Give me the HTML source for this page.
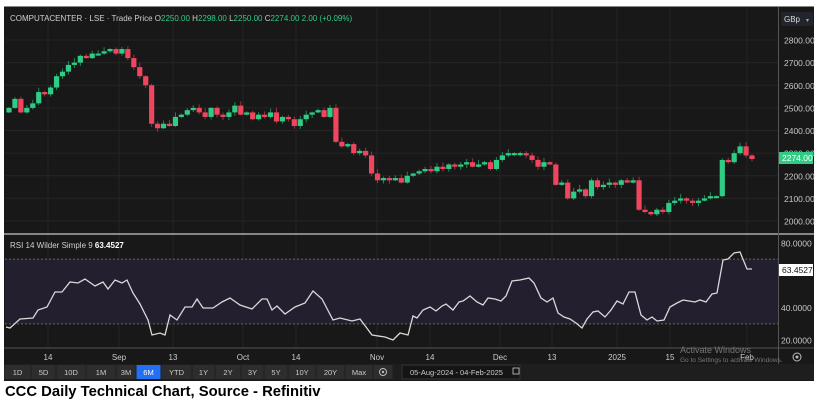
<!DOCTYPE html>
<html><head><meta charset="utf-8"><style>
body{margin:0;width:821px;height:405px;background:#fff;overflow:hidden;font-family:"Liberation Sans",sans-serif;position:relative}
#p{position:absolute;left:4px;top:6px;width:810px;height:374px;background:#181818;border-top:1px solid #888}
.cap{position:absolute;left:5px;top:384px;font-weight:bold;font-size:14.8px;color:#000;letter-spacing:0}
svg{position:absolute;left:0;top:0}
</style></head><body>
<div id="p"></div>
<svg id="s" width="821" height="405" font-family="Liberation Sans, sans-serif"></svg>
<div class="cap">CCC Daily Technical Chart, Source - Refinitiv</div>
<script>
var s='';
function Y(p){return 40+(2800-p)*0.2263}
function R(r){return 243+(80-r)*1.617}
var vx=[48,119,173,243,296,377,430,500,552,617,670,747];
vx.forEach(function(x){s+='<line x1="'+x+'" y1="8" x2="'+x+'" y2="347" stroke="#252525"/>';});
for(var p=2000;p<=2800;p+=100){var y=Y(p);s+='<line x1="5" y1="'+y+'" x2="778" y2="'+y+'" stroke="#252525"/>';
s+='<text x="784" y="'+(y+3.5)+'" fill="#c8c8c8" font-size="8.5">'+p+'.00</text>';}
s+='<rect x="5" y="'+R(70)+'" width="773" height="'+(R(30)-R(70))+'" fill="#241f2e"/>';
s+='<line x1="5" y1="'+R(70)+'" x2="778" y2="'+R(70)+'" stroke="#666" stroke-dasharray="2,2"/>';
s+='<line x1="5" y1="'+R(30)+'" x2="778" y2="'+R(30)+'" stroke="#666" stroke-dasharray="2,2"/>';
[80,40,20].forEach(function(r){s+='<text x="781" y="'+(R(r)+3.5)+'" fill="#c8c8c8" font-size="8.5">'+r+'.0000</text>';});
s+='<line x1="4" y1="234" x2="814" y2="234" stroke="#aaa" stroke-width="1.5"/>';
s+='<line x1="4" y1="348" x2="814" y2="348" stroke="#555"/>';
s+='<line x1="778.5" y1="7" x2="778.5" y2="365" stroke="#555"/>';
var cl=[2500,2540,2480,2500,2520,2570,2560,2590,2640,2660,2690,2700,2730,2720,2740,2740,2750,2760,2740,2760,2720,2680,2640,2600,2430,2410,2430,2420,2460,2470,2490,2500,2480,2460,2500,2470,2460,2480,2510,2470,2480,2450,2470,2460,2480,2440,2460,2450,2420,2450,2470,2480,2490,2460,2500,2350,2330,2340,2300,2310,2290,2210,2180,2190,2180,2190,2170,2200,2210,2220,2230,2220,2240,2230,2250,2240,2250,2260,2240,2250,2260,2230,2270,2290,2300,2300,2300,2290,2270,2240,2260,2250,2160,2170,2100,2130,2140,2110,2180,2150,2160,2170,2160,2180,2170,2180,2050,2040,2030,2050,2040,2080,2090,2100,2090,2080,2090,2100,2110,2110,2270,2260,2300,2330,2290,2274];
var n=cl.length,x0=9,dx=(752-9)/(n-1),prev=2480;
for(var i=0;i<n;i++){var o=prev,c=cl[i];if(o==c)o=c-4;var up=c>o,col=up?'#2fcc85':'#f0455f';
var hi=Math.max(o,c)+4+(i*37%17),lo=Math.min(o,c)-3-(i*53%13);var x=x0+i*dx;
s+='<line x1="'+x+'" y1="'+Y(hi)+'" x2="'+x+'" y2="'+Y(lo)+'" stroke="'+col+'" stroke-width="1" opacity=".6"/>';
var t=Y(Math.max(o,c)),h=Math.max(2,Y(Math.min(o,c))-t);
s+='<rect x="'+(x-2.6)+'" y="'+t+'" width="5.2" height="'+h+'" fill="'+col+'"/>';prev=c;}
var rp=[[6,327],[10,328],[20,319],[33,318],[38,310],[47,307],[55,292],[62,292],[70,282],[78,283],[85,279],[95,286],[103,282],[108,289],[115,280],[122,283],[127,280],[133,293],[140,304],[148,320],[152,335],[160,333],[165,335],[170,315],[177,320],[185,307],[192,307],[197,299],[203,308],[213,308],[222,302],[230,298],[240,305],[252,309],[262,299],[267,299],[272,310],[277,306],[285,314],[295,307],[305,303],[313,291],[322,299],[333,320],[340,318],[352,321],[360,319],[372,335],[385,337],[393,340],[400,333],[408,335],[413,316],[417,318],[423,310],[430,307],[436,311],[442,306],[446,304],[453,310],[459,302],[463,301],[470,296],[477,302],[483,305],[488,298],[495,299],[501,301],[506,296],[512,281],[520,280],[529,278],[534,283],[541,298],[547,302],[553,298],[558,313],[564,317],[570,319],[576,323],[582,328],[587,319],[593,312],[598,311],[605,317],[611,310],[617,301],[623,304],[629,292],[635,292],[641,315],[647,320],[652,317],[657,321],[664,320],[670,307],[677,303],[683,300],[689,301],[695,302],[700,300],[706,302],[712,294],[717,293],[723,260],[728,259],[734,253],[740,252],[747,269],[752,269]];
s+='<polyline fill="none" stroke="#d8d8d8" stroke-width="1.3" points="'+rp.map(function(a){return a.join(',')}).join(' ')+'"/>';
s+='<text x="10" y="21" font-size="8" fill="#cfcfcf">COMPUTACENTER · LSE · Trade Price  <tspan>O</tspan><tspan fill="#2fcc85">2250.00</tspan> <tspan>H</tspan><tspan fill="#2fcc85">2298.00</tspan> <tspan>L</tspan><tspan fill="#2fcc85">2250.00</tspan> <tspan>C</tspan><tspan fill="#2fcc85">2274.00</tspan> <tspan fill="#2fcc85">2.00 (+0.09%)</tspan></text>';
s+='<text x="10" y="248" font-size="8" fill="#cfcfcf">RSI 14 Wilder Simple 9  <tspan font-weight="bold" fill="#fff">63.4527</tspan></text>';
s+='<rect x="781" y="12" width="32" height="14" rx="2" fill="#22252e"/><text x="784" y="22" font-size="8" fill="#ddd">GBp</text><text x="806" y="22" font-size="6" fill="#aaa">▾</text>';
s+='<rect x="779" y="152" width="34" height="12" fill="#2fcc85"/><text x="782" y="161" font-size="8.5" fill="#fff">2274.00</text>';
s+='<rect x="779" y="264" width="34" height="12" fill="#fff"/><text x="782" y="273" font-size="8.5" fill="#111">63.4527</text>';
var xl=[[48,'14'],[119,'Sep'],[173,'13'],[243,'Oct'],[296,'14'],[377,'Nov'],[430,'14'],[500,'Dec'],[552,'13'],[617,'2025'],[670,'15'],[747,'Feb']];
xl.forEach(function(a){s+='<text x="'+a[0]+'" y="360" font-size="8" fill="#ccc" text-anchor="middle">'+a[1]+'</text>';});
s+='<text x="680" y="353" font-size="9" fill="#777">Activate Windows</text><text x="680" y="362" font-size="6.5" fill="#777">Go to Settings to activate Windows.</text>';
s+='<circle cx="797" cy="357" r="4" fill="none" stroke="#bbb"/><circle cx="797" cy="357" r="1.5" fill="#bbb"/>';
s+='<rect x="4" y="364" width="810" height="16" fill="#1e1e1e"/>';
var b=[[4,31,'1D'],[31,56,'5D'],[56,86,'10D'],[86,116,'1M'],[116,136,'3M'],[136,161,'6M'],[161,192,'YTD'],[192,215,'1Y'],[215,241,'2Y'],[241,264,'3Y'],[264,288,'5Y'],[288,316,'10Y'],[316,345,'20Y'],[345,373,'Max'],[373,393,'']];
b.forEach(function(a){var act=a[2]=='6M';s+='<rect x="'+(a[0]+0.5)+'" y="365" width="'+(a[1]-a[0]-1)+'" height="14" fill="'+(act?'#2170f5':'#2d2d2d')+'"/>';
if(a[2])s+='<text x="'+((a[0]+a[1])/2)+'" y="375" font-size="7.5" fill="'+(act?'#fff':'#ccc')+'" text-anchor="middle">'+a[2]+'</text>';});
s+='<circle cx="383" cy="372" r="3.5" fill="none" stroke="#bbb"/><circle cx="383" cy="372" r="1.2" fill="#bbb"/>';
s+='<rect x="402" y="365" width="118" height="14" fill="#151515" stroke="#333"/><text x="410" y="375" font-size="7.5" fill="#ccc">05-Aug-2024  -  04-Feb-2025</text><rect x="513" y="368" width="6" height="6" fill="none" stroke="#ccc" stroke-width=".8"/>';
document.getElementById('s').innerHTML=s;
</script>
</body></html>
